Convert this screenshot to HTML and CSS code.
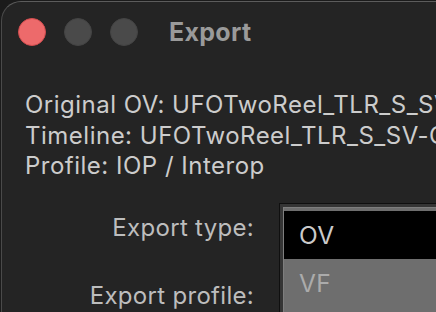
FILE: index.html
```html
<!DOCTYPE html>
<html lang="en">
<head>
    <meta charset="UTF-8">
    <title>Export</title>
    <link rel="stylesheet" href="styles.css">
</head>
<body>
<div class="window">
    <div class="titlebar">
        <span class="light close"></span>
        <span class="light"></span>
        <span class="light"></span>
        <span class="title">Export</span>
    </div>
    <div class="info">
        <div>Original OV: UFOTwoReel_TLR_S_SV-CH_51_2K_20230901_OV</div>
        <div>Timeline: UFOTwoReel_TLR_S_SV-CH_51_2K_20230901</div>
        <div>Profile: IOP / Interop</div>
    </div>
    <div class="form">
        <label>Export type:</label>
        <div></div>
        <label>Export profile:</label>
        <div></div>
        <div class="menu">
            <div class="menu-list">
                <div class="item selected">OV</div>
                <div class="item">VF</div>
            </div>
        </div>
    </div>
</div>
</body>
</html>
```

FILE: styles.css
```css
html, body {
    margin: 0;
    height: 100%;
    background: #1b1b1b;
    overflow: hidden;
}
body {
    font-family: Inter, "Noto Sans", sans-serif;
}
.window {
    margin: 1px 0 0 1px;
    height: 100%;
    border-top: 1px solid #5c5c5c;
    border-left: 1px solid #4a4a4a;
    border-top-left-radius: 20px;
    background: #242424;
    overflow: hidden;
}
.titlebar {
    display: flex;
    align-items: center;
    height: 60px;
    padding-left: 16px;
    gap: 18px;
}
.light {
    width: 28px;
    height: 28px;
    border-radius: 50%;
    background: #4a4a4a;
    box-sizing: border-box;
    border: 1px solid #444;
}
.light.close {
    background: #ed6a6b;
    border-color: #d24d4f;
}
.title {
    margin-left: 13px;
    font-size: 25px;
    font-weight: 700;
    letter-spacing: 0.3px;
    color: #9a9a9a;
}
.info {
    margin-top: 28px;
    padding-left: 23px;
    font-size: 24px;
    line-height: 30.5px;
    letter-spacing: 0.5px;
    color: #cccccc;
    white-space: nowrap;
}
.form {
    position: relative;
    margin-top: 31.5px;
    display: grid;
    grid-template-columns: 252px 1fr;
    row-gap: 37.5px;
    font-size: 24px;
    line-height: 30.5px;
}
.form label {
    text-align: right;
    color: #bdbdbd;
    letter-spacing: 0.3px;
    white-space: nowrap;
}
.menu {
    position: absolute;
    top: -10px;
    left: 277px;
    width: 300px;
    height: 200px;
    border: 1px solid #0f0f0f;
    padding: 3px 0 0 3px;
    background: #353535;
}
.menu-list {
    height: 100%;
    padding: 4px 0 0 1px;
    background: #6e6e6e;
    box-shadow: inset 1px 1px 0 #7e7e7e;
}
.item {
    height: 48px;
    line-height: 48px;
    padding-left: 15px;
    font-size: 24.5px;
    letter-spacing: 0.4px;
    color: #ababab;
}
.item.selected {
    background: #000;
    color: #cacaca;
}
```
